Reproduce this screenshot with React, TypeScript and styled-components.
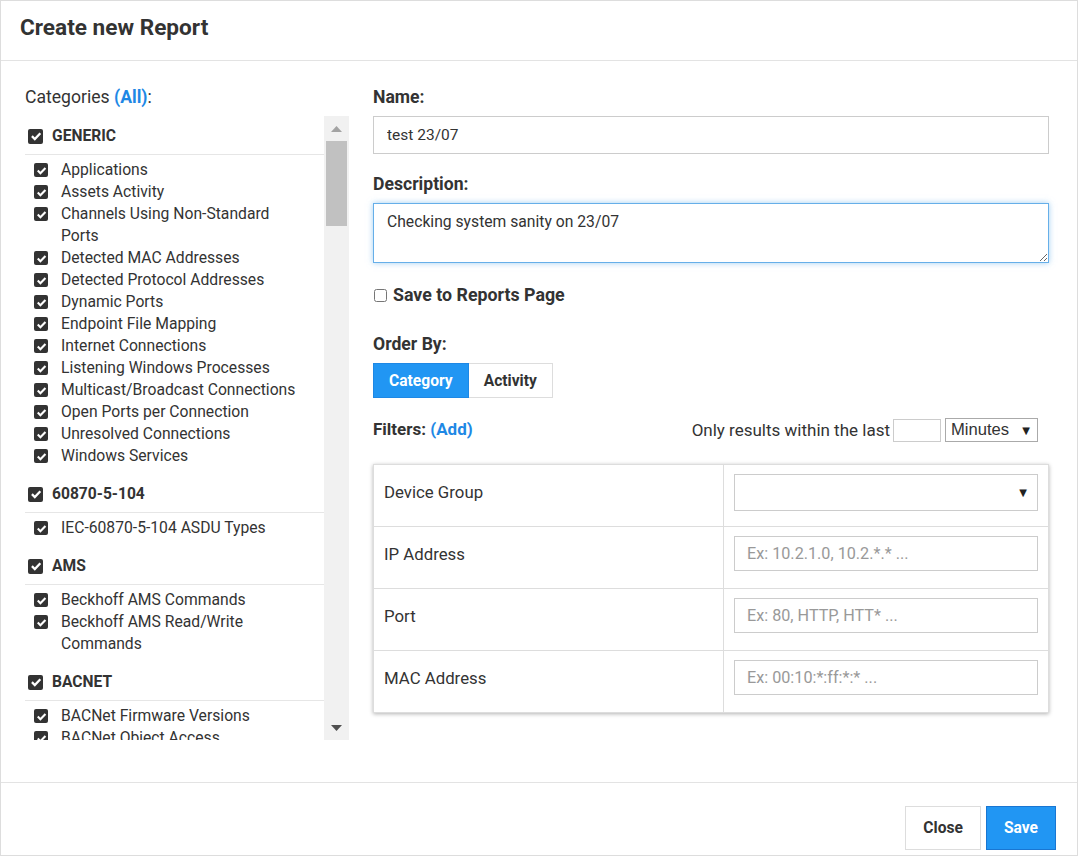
import React from "react";
import styled, { createGlobalStyle } from "styled-components";

const GlobalStyle = createGlobalStyle`
  html, body { margin: 0; padding: 0; background: #fff; }
  body { font-family: Roboto, "Noto Sans", Arial, sans-serif; color: #333; }
  * { box-sizing: border-box; }
`;

const Dialog = styled.div`
  width: 1078px;
  height: 856px;
  border: 1px solid #ddd;
  display: flex;
  flex-direction: column;
  background: #fff;
`;

const Header = styled.div`
  height: 60px;
  flex: none;
  border-bottom: 1px solid #e3e3e3;
  padding: 14px 0 0 19px;
`;

const Title = styled.h1`
  margin: 0;
  font-size: 22.6px;
  line-height: 26px;
  font-weight: 700;
  color: #333;
`;

const Body = styled.div`
  flex: 1;
  display: flex;
  gap: 24px;
  padding: 26px 28px 0 24px;
  min-height: 0;
`;

const LeftCol = styled.div`
  width: 324px;
  flex: none;
  display: flex;
  flex-direction: column;
`;

const RightCol = styled.div`
  flex: 1;
  display: flex;
  flex-direction: column;
`;

const CatLabel = styled.div`
  font-size: 17.6px;
  line-height: 20px;
  margin-bottom: 9px;
`;

const Link = styled.span`
  color: #1e88e5;
  font-weight: 700;
`;

const ListFrame = styled.div`
  height: 624px;
  display: flex;
`;

const ListContent = styled.div`
  flex: 1;
  overflow: hidden;
`;

const Track = styled.div`
  width: 25px;
  flex: none;
  background: #f1f1f1;
  display: flex;
  flex-direction: column;
  align-items: center;
`;

const ArrowBtn = styled.div`
  height: 25px;
  width: 100%;
  display: flex;
  align-items: center;
  justify-content: center;
`;

const Thumb = styled.div`
  width: 21px;
  height: 85px;
  background: #c1c1c1;
`;

const Spacer = styled.div`
  flex: 1;
`;

const Group = styled.div`
  padding-bottom: 7px;
`;

const GroupHead = styled.div`
  display: flex;
  align-items: center;
  gap: 9px;
  padding: 9px 0 7px 3px;
  border-bottom: 1px solid #e6e6e6;
  font-size: 15.6px;
  line-height: 22px;
  font-weight: 700;
`;

const Items = styled.div`
  padding: 4px 20px 0 9px;
`;

const Item = styled.div`
  display: flex;
  align-items: flex-start;
  gap: 13px;
  font-size: 15.7px;
  line-height: 22px;
`;

const Box = styled.span<{ $size: number }>`
  width: ${(p) => p.$size}px;
  height: ${(p) => p.$size}px;
  flex: none;
  border-radius: 2px;
  background: #333;
  display: inline-flex;
  align-items: center;
  justify-content: center;
  margin-top: ${(p) => (p.$size === 15 ? 0 : 4)}px;
`;

const Check = ({ size }: { size: number }) => (
  <Box $size={size}>
    <svg width={size - 3} height={size - 3} viewBox="0 0 10 10">
      <path d="M1.6 5.1 L4 7.5 L8.6 2.7" fill="none" stroke="#fff" strokeWidth="1.9" />
    </svg>
  </Box>
);

const FieldLabel = styled.div<{ $mt: number }>`
  font-size: 17.6px;
  line-height: 20px;
  font-weight: 700;
  margin-top: ${(p) => p.$mt}px;
`;

const TextInput = styled.input`
  display: block;
  margin-top: 9px;
  width: 676px;
  height: 38px;
  border: 1px solid #ccc;
  padding: 0 13px;
  font-family: Roboto, sans-serif;
  font-size: 15.5px;
  color: #333;
  outline: none;
`;

const TextArea = styled.textarea`
  display: block;
  margin-top: 9px;
  width: 676px;
  height: 60px;
  border: 1px solid #66afe9;
  box-shadow: 0 0 6px rgba(102, 175, 233, 0.6);
  padding: 9px 13px;
  font-family: Roboto, sans-serif;
  font-size: 15.7px;
  line-height: 18px;
  color: #333;
  outline: none;
`;

const CheckRow = styled.label`
  display: flex;
  align-items: center;
  margin-top: 22px;
  font-size: 17.8px;
  line-height: 20px;
  font-weight: 700;
  input {
    margin: 0 6px 0 1px;
    width: 13px;
    height: 13px;
  }
`;

const BtnGroup = styled.div`
  display: flex;
  margin-top: 9px;
`;

const SegBtn = styled.button<{ $active?: boolean }>`
  height: 35px;
  padding: 0 15px;
  font-family: Roboto, sans-serif;
  font-size: 15.6px;
  font-weight: 700;
  border: 1px solid ${(p) => (p.$active ? "#1e88e5" : "#ddd")};
  background: ${(p) => (p.$active ? "#2196f3" : "#fff")};
  color: ${(p) => (p.$active ? "#fff" : "#333")};
  & + & { border-left: none; }
`;

const FilterBar = styled.div`
  display: flex;
  justify-content: space-between;
  align-items: center;
  margin-top: 20px;
  padding-right: 11px;
`;

const FilterTitle = styled.div`
  font-size: 17px;
  font-weight: 700;
  margin-top: -3px;
`;

const WithinLast = styled.div`
  display: flex;
  align-items: center;
  font-size: 17px;
`;

const SmallInput = styled.input`
  width: 48px;
  height: 23px;
  margin-left: 3px;
  border: 1px solid #ccc;
  outline: none;
`;

const MiniSelect = styled.div`
  width: 93px;
  height: 24px;
  margin-left: 4px;
  border: 1px solid #aaa;
  display: flex;
  align-items: center;
  justify-content: space-between;
  padding: 0 7px 0 5px;
  font-family: "Liberation Sans", Arial, sans-serif;
  font-size: 16.6px;
  color: #333;
`;

const Arrow = styled.span`
  font-family: "DejaVu Sans", sans-serif;
  font-size: 10px;
  color: #222;
`;

const Table = styled.div`
  margin-top: 22px;
  width: 676px;
  border: 1px solid #ddd;
  border-top: none;
  box-shadow: 0 1px 4px rgba(0, 0, 0, 0.3);
`;

const Row = styled.div`
  display: flex;
  height: 62px;
  border-top: 1px solid #ddd;
`;

const RowLabel = styled.div`
  width: 350px;
  border-right: 1px solid #ddd;
  padding: 17px 0 0 10px;
  font-size: 16.8px;
  line-height: 20px;
`;

const RowField = styled.div`
  flex: 1;
  padding: 9px 10px 0 10px;
`;

const FieldInput = styled.input`
  width: 100%;
  height: 35px;
  border: 1px solid #ccc;
  padding: 0 12px;
  font-family: Roboto, sans-serif;
  font-size: 16.2px;
  outline: none;
  &::placeholder { color: #999; }
`;

const FieldSelect = styled.div`
  height: 37px;
  border: 1px solid #ccc;
  display: flex;
  align-items: center;
  justify-content: flex-end;
  padding-right: 10px;
`;

const Footer = styled.div`
  height: 73px;
  flex: none;
  border-top: 1px solid #e3e3e3;
  display: flex;
  justify-content: flex-end;
  align-items: flex-start;
  gap: 5px;
  padding: 23px 21px 0 0;
`;

const FootBtn = styled.button<{ $primary?: boolean }>`
  height: 44px;
  padding: 0 17px;
  font-family: Roboto, sans-serif;
  font-size: 15.6px;
  font-weight: 700;
  border: 1px solid ${(p) => (p.$primary ? "#1976d2" : "#ddd")};
  background: ${(p) => (p.$primary ? "#2196f3" : "#fff")};
  color: ${(p) => (p.$primary ? "#fff" : "#333")};
`;

const groups: { name: string; items: string[] }[] = [
  {
    name: "GENERIC",
    items: [
      "Applications",
      "Assets Activity",
      "Channels Using Non-Standard Ports",
      "Detected MAC Addresses",
      "Detected Protocol Addresses",
      "Dynamic Ports",
      "Endpoint File Mapping",
      "Internet Connections",
      "Listening Windows Processes",
      "Multicast/Broadcast Connections",
      "Open Ports per Connection",
      "Unresolved Connections",
      "Windows Services",
    ],
  },
  { name: "60870-5-104", items: ["IEC-60870-5-104 ASDU Types"] },
  { name: "AMS", items: ["Beckhoff AMS Commands", "Beckhoff AMS Read/Write Commands"] },
  {
    name: "BACNET",
    items: ["BACNet Firmware Versions", "BACNet Object Access", "BACNet Devices", "BACNet Services"],
  },
];

const filters = [
  { label: "Device Group", select: true },
  { label: "IP Address", ph: "Ex: 10.2.1.0, 10.2.*.* ..." },
  { label: "Port", ph: "Ex: 80, HTTP, HTT* ..." },
  { label: "MAC Address", ph: "Ex: 00:10:*:ff:*:* ..." },
];

export default function App() {
  return (
    <>
      <GlobalStyle />
      <Dialog>
        <Header>
          <Title>Create new Report</Title>
        </Header>
        <Body>
          <LeftCol>
            <CatLabel>
              Categories <Link>(All)</Link>:
            </CatLabel>
            <ListFrame>
              <ListContent>
                {groups.map((g) => (
                  <Group key={g.name}>
                    <GroupHead>
                      <Check size={15} />
                      {g.name}
                    </GroupHead>
                    <Items>
                      {g.items.map((it) => (
                        <Item key={it}>
                          <Check size={14} />
                          <span>{it}</span>
                        </Item>
                      ))}
                    </Items>
                  </Group>
                ))}
              </ListContent>
              <Track>
                <ArrowBtn>
                  <svg width="11" height="6" viewBox="0 0 11 6">
                    <path d="M0 6 L5.5 0 L11 6 Z" fill="#a3a3a3" />
                  </svg>
                </ArrowBtn>
                <Thumb />
                <Spacer />
                <ArrowBtn>
                  <svg width="11" height="6" viewBox="0 0 11 6">
                    <path d="M0 0 L11 0 L5.5 6 Z" fill="#505050" />
                  </svg>
                </ArrowBtn>
              </Track>
            </ListFrame>
          </LeftCol>
          <RightCol>
            <FieldLabel $mt={0}>Name:</FieldLabel>
            <TextInput defaultValue="test 23/07" />
            <FieldLabel $mt={20}>Description:</FieldLabel>
            <TextArea defaultValue="Checking system sanity on 23/07" />
            <CheckRow>
              <input type="checkbox" />
              Save to Reports Page
            </CheckRow>
            <FieldLabel $mt={29}>Order By:</FieldLabel>
            <BtnGroup>
              <SegBtn $active>Category</SegBtn>
              <SegBtn>Activity</SegBtn>
            </BtnGroup>
            <FilterBar>
              <FilterTitle>
                Filters: <Link>(Add)</Link>
              </FilterTitle>
              <WithinLast>
                Only results within the last
                <SmallInput />
                <MiniSelect>
                  Minutes <Arrow>▼</Arrow>
                </MiniSelect>
              </WithinLast>
            </FilterBar>
            <Table>
              {filters.map((f) => (
                <Row key={f.label}>
                  <RowLabel>{f.label}</RowLabel>
                  <RowField>
                    {f.select ? (
                      <FieldSelect>
                        <Arrow>▼</Arrow>
                      </FieldSelect>
                    ) : (
                      <FieldInput placeholder={f.ph} />
                    )}
                  </RowField>
                </Row>
              ))}
            </Table>
          </RightCol>
        </Body>
        <Footer>
          <FootBtn>Close</FootBtn>
          <FootBtn $primary>Save</FootBtn>
        </Footer>
      </Dialog>
    </>
  );
}
